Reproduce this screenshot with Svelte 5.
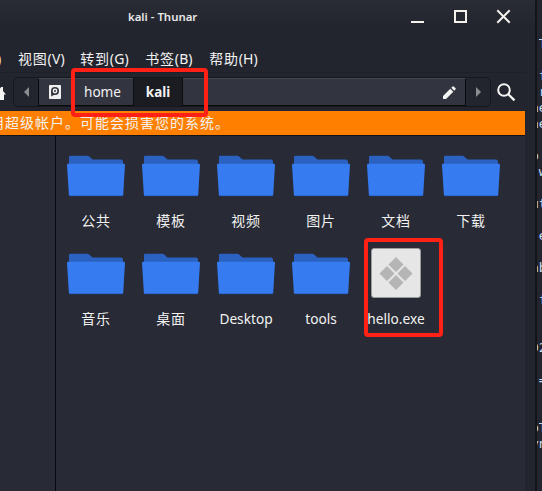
<script>
  const menus = [['视图', '(V)', 18], ['转到', '(G)', 15.5], ['书签', '(B)', 16.5], ['帮助', '(H)', 16.5]];
  const files = ['公共', '模板', '视频', '图片', '文档', '下载', '音乐', '桌面', 'Desktop', 'tools', 'hello.exe'];
  const output = [' T', '', '.f', ' r', 'ne', 'ne', '', 'p', ' w', '', 'ut', '', '.e', '', 'ab', '', ' f', '', '', '02', '', ':=', '', '', 'pT', 'yn'];
</script>

<div class="screen">
  <main class="window">
    <header>
      <span class="title">kali - Thunar</span>
      <svg class="controls" width="100" height="13" viewBox="0 0 100 13" fill="none" stroke="#f4f0ed" stroke-width="2">
        <path d="M0 12H13M44 1H55V12H44Z" />
        <path d="M87 1L98 12M98 1L87 12" stroke-linecap="square" />
      </svg>
    </header>
    <nav class="menu">
      <span class="cut">)</span>
      {#each menus as [label, key, gap], i}
        <span class="item" style:margin-left="{i ? gap : 16}px">{label}<span class="key">{key}</span></span>
      {/each}
    </nav>
    <div class="toolbar">
      <svg class="house" width="6" height="16" viewBox="0 0 6 16"><path d="M-8 9L-1 1L1 3.5V2H3V6L6 9.5H4V15H0V10H-4V15H-8Z" fill="#f4f4f2" /></svg>
      <div class="pathbar">
        <div class="arrow left"><svg width="5" height="10"><path d="M5 0V10L0 5Z" fill="#8a8c8f" /></svg></div>
        <div class="disk">
          <svg width="12" height="14" viewBox="0 0 12 14"><rect width="12" height="14" rx=".7" fill="#f0f0f0" /><path d="M2.2 6V11.5L7.5 8.6Z" fill="#323540" /><circle cx="6" cy="6" r="4" fill="#323540" /><circle cx="6" cy="6" r="2.4" fill="#f0f0f0" /><circle cx="6" cy="6" r="1" fill="#323540" /></svg>
        </div>
        <div class="crumb home">home</div>
        <div class="crumb current">kali</div>
        <div class="entry">
          <svg width="13" height="13" viewBox="0 0 13 13" fill="#f5f5f3"><path d="M0 13V10L7.3 2.7L10.3 5.7L3 13ZM8.3 1.8L9.7.4Q10.2 0 10.7.4L12.6 2.3Q13 2.8 12.6 3.3L11.2 4.7Z" /></svg>
        </div>
        <div class="arrow right"><svg width="5" height="10"><path d="M0 0V10L5 5Z" fill="#8a8c8f" /></svg></div>
      </div>
      <svg class="search" width="19" height="19" viewBox="0 0 19 19" fill="none" stroke="#f5f5f3"><circle cx="7" cy="7" r="5.8" stroke-width="2" /><path d="M11 11L17.5 17.3" stroke-width="2.3" /></svg>
    </div>
    <div class="warning"><span>用超级帐户。可能会损害您的系统。</span></div>
    <div class="body">
      <aside></aside>
      <section>
        {#each files as name}
          <div class="file">
            {#if name === 'hello.exe'}
              <svg width="58" height="51" viewBox="0 0 58 51">
                <rect x="4.5" y=".5" width="49" height="49" rx="2.5" fill="#e6e6e6" stroke="#9b9c9e" />
                <path d="M29 9L36.5 16.5L29 24L21.5 16.5ZM20 18L27.5 25.5L20 33L12.5 25.5ZM38 18L45.5 25.5L38 33L30.5 25.5ZM29 27L36.5 34.5L29 42L21.5 34.5Z" fill="#b5b5b5" />
              </svg>
            {:else}
              <svg width="58" height="51" viewBox="0 0 58 51">
                <path d="M2 17V2Q2 .7 3.3 .7H20Q21.6 .7 22.7 2L25.5 4.4H54Q55.8 4.4 56 6.5V17Z" transform="translate(0 5)" fill="#2b62c1" />
                <path d="M0 15Q0 13.8 1.1 13.8H56.9Q58 13.8 58 15L56.2 44.8Q56 46 54.8 46H3.2Q2 46 1.9 44.8Z" fill="#367bf0" />
                <path d="M2.5 45.7H55.5" stroke="#245bbc" stroke-width=".7" />
              </svg>
            {/if}
            <span class:latin={name.charCodeAt(0) < 128}>{name}</span>
          </div>
        {/each}
      </section>
    </div>
  </main>
  <div class="terminal">
    {#each output as line}<pre>{line}</pre>{/each}
  </div>
  <div class="mark path"></div>
  <div class="mark exe"></div>
</div>

<style>
  .screen { position: relative; display: flex; width: 542px; height: 491px; overflow: hidden; background: #23252e; color: #f2f2f2; font: 14px/20px "Noto Sans", "Noto Sans CJK SC", sans-serif; }
  svg { display: block; flex: none; overflow: visible; }
  .house { overflow: hidden; }
  .window { box-sizing: border-box; width: 537px; flex: none; display: flex; flex-direction: column; padding-right: 10px; border-right: 2px solid #131418; background: linear-gradient(#292b35, #23252e 28px); }
  header { height: 45px; display: flex; align-items: flex-start; flex: none; }
  .title { margin-left: 128px; width: 283px; margin-top: 7px; font-size: 11.4px; font-weight: 600; color: #e9e9e9; white-space: nowrap; }
  .controls { margin-top: 10px; }
  .menu { height: 27px; display: flex; align-items: center; flex: none; border-bottom: 1px solid #1e2027; white-space: nowrap; line-height: 27px; }
  .cut { width: 5px; margin-left: -3px; }
  .item { font-size: 14px; letter-spacing: .8px; }
  .key { font-size: 14px; letter-spacing: .1px; }
  .toolbar { height: 38px; display: flex; align-items: flex-start; flex: none; padding-top: 4px; box-sizing: border-box; }
  .house { margin-top: 8px; }
  .pathbar { box-sizing: border-box; width: 478px; height: 30px; margin-left: 7px; display: flex; border: 1px solid #15171c; border-radius: 5px; background: #23252e; }
  .pathbar > div { box-sizing: border-box; display: flex; align-items: center; justify-content: center; height: 28px; }
  .arrow { width: 24px; }
  .disk, .home, .entry { background: #323540; border-top: 1px solid #454750; border-bottom: 1px solid #07080b; }
  .pathbar .disk { width: 36px; border-left: 1px solid #090a0e; padding-right: 4px; }
  .home { width: 59px; padding-right: 2px; font-size: 13.6px; }
  .pathbar .current { width: 50px; background: #1a1c22; border: solid #0b0c10; border-width: 0 1px; font-weight: 700; font-size: 13.4px; }
  .pathbar .entry { flex: 1; border-right: 1px solid #090a0e; justify-content: flex-end; padding-right: 9px; }
  .search { margin: 6px 0 0 6px; }
  .warning { height: 24px; width: 525px; flex: none; overflow: hidden; background: #ff8000; border-bottom: 1px solid #111319; white-space: nowrap; font-size: 14px; letter-spacing: 1px; line-height: 23px; }
  .warning span { margin-left: -10px; }
  .body { flex: 1; width: 525px; display: flex; background: #282a35; }
  aside { width: 55px; border-right: 1px solid #08090e; }
  section { flex: 1; padding: 14px 0 0 2px; display: grid; grid-template-columns: repeat(6, 75px); grid-template-rows: 98px 98px; }
  .file { display: flex; flex-direction: column; align-items: center; }
  .file span { margin-top: 10px; height: 20px; white-space: nowrap; letter-spacing: .7px; padding-left: 1px; }
  .file .latin { font-size: 13.7px; letter-spacing: 0; }
  .terminal { flex: 1; overflow: hidden; padding-top: 36px; background: #23252e; }
  .terminal pre { height: 16px; margin: 0 0 0 -6px; font: 13px/16px "DejaVu Sans Mono", monospace; color: #c2ddf5; }
  .mark { position: absolute; box-sizing: border-box; border: 4px solid #ff2016; border-radius: 4px; }
  .path { left: 71px; top: 68px; width: 137px; height: 49px; }
  .exe { left: 364px; top: 238px; width: 79px; height: 99px; }
</style>
